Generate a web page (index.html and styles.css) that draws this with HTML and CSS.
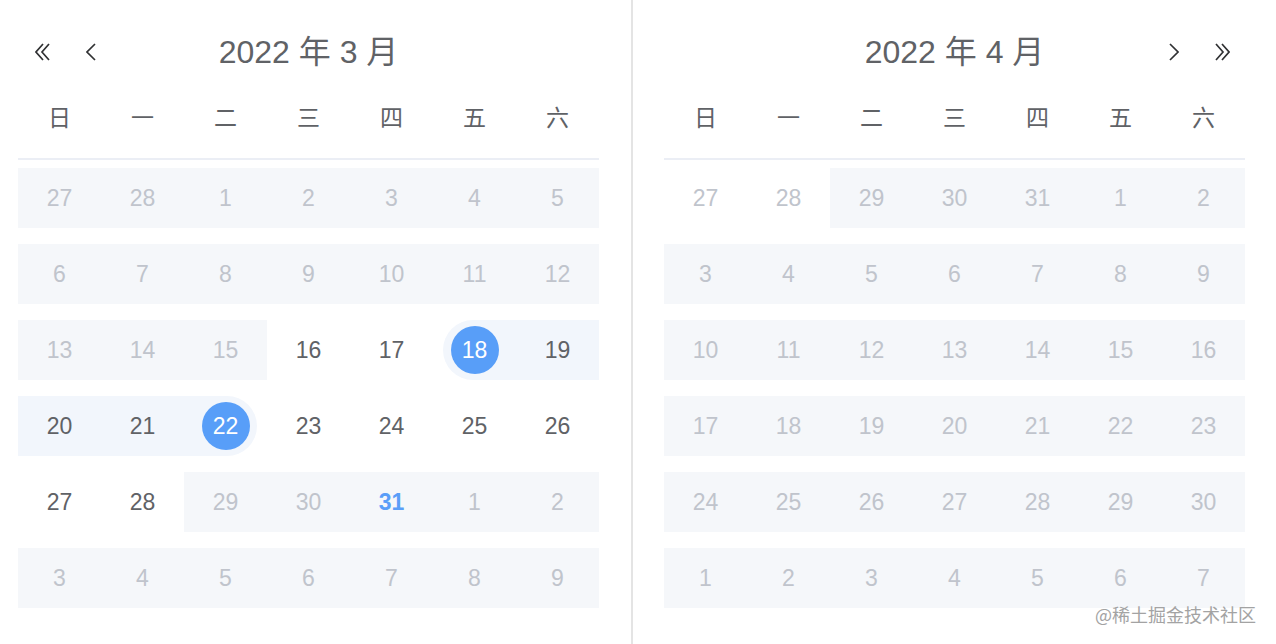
FILE: index.html
```html
<!DOCTYPE html>
<html lang="zh-CN">
<head>
<meta charset="utf-8">
<title>日期范围选择</title>
<link rel="stylesheet" href="styles.css">
</head>
<body>
<div class="picker">
  <section class="panel panel-left">
    <header class="head">
      <div class="nav nav-left">
        <svg class="ico ico-d" viewBox="0 0 16 18"><polyline points="8,1 1,9 8,17"/><polyline points="14,1 7,9 14,17"/></svg>
        <svg class="ico ico-s" viewBox="0 0 10 18"><polyline points="9,1 1,9 9,17"/></svg>
      </div>
      <div class="title">2022 年 3 月</div>
      <div class="nav nav-right"></div>
    </header>
    <div class="week">
      <span>日</span><span>一</span><span>二</span><span>三</span><span>四</span><span>五</span><span>六</span>
    </div>
    <div class="rows">
      <div class="row">
        <div class="cell dis"><span>27</span></div><div class="cell dis"><span>28</span></div><div class="cell dis"><span>1</span></div><div class="cell dis"><span>2</span></div><div class="cell dis"><span>3</span></div><div class="cell dis"><span>4</span></div><div class="cell dis"><span>5</span></div>
      </div>
      <div class="row">
        <div class="cell dis"><span>6</span></div><div class="cell dis"><span>7</span></div><div class="cell dis"><span>8</span></div><div class="cell dis"><span>9</span></div><div class="cell dis"><span>10</span></div><div class="cell dis"><span>11</span></div><div class="cell dis"><span>12</span></div>
      </div>
      <div class="row">
        <div class="cell dis"><span>13</span></div><div class="cell dis"><span>14</span></div><div class="cell dis"><span>15</span></div><div class="cell"><span>16</span></div><div class="cell"><span>17</span></div><div class="cell range start"><span>18</span></div><div class="cell range"><span>19</span></div>
      </div>
      <div class="row">
        <div class="cell range"><span>20</span></div><div class="cell range"><span>21</span></div><div class="cell range end"><span>22</span></div><div class="cell"><span>23</span></div><div class="cell"><span>24</span></div><div class="cell"><span>25</span></div><div class="cell"><span>26</span></div>
      </div>
      <div class="row">
        <div class="cell"><span>27</span></div><div class="cell"><span>28</span></div><div class="cell dis"><span>29</span></div><div class="cell dis"><span>30</span></div><div class="cell dis today"><span>31</span></div><div class="cell dis"><span>1</span></div><div class="cell dis"><span>2</span></div>
      </div>
      <div class="row">
        <div class="cell dis"><span>3</span></div><div class="cell dis"><span>4</span></div><div class="cell dis"><span>5</span></div><div class="cell dis"><span>6</span></div><div class="cell dis"><span>7</span></div><div class="cell dis"><span>8</span></div><div class="cell dis"><span>9</span></div>
      </div>
    </div>
  </section>
  <section class="panel panel-right">
    <header class="head">
      <div class="nav nav-left"></div>
      <div class="title">2022 年 4 月</div>
      <div class="nav nav-right">
        <svg class="ico ico-s" viewBox="0 0 10 18"><polyline points="1,1 9,9 1,17"/></svg>
        <svg class="ico ico-d" viewBox="0 0 16 18"><polyline points="2,1 9,9 2,17"/><polyline points="8,1 15,9 8,17"/></svg>
      </div>
    </header>
    <div class="week">
      <span>日</span><span>一</span><span>二</span><span>三</span><span>四</span><span>五</span><span>六</span>
    </div>
    <div class="rows">
      <div class="row">
        <div class="cell prev"><span>27</span></div><div class="cell prev"><span>28</span></div><div class="cell dis"><span>29</span></div><div class="cell dis"><span>30</span></div><div class="cell dis"><span>31</span></div><div class="cell dis"><span>1</span></div><div class="cell dis"><span>2</span></div>
      </div>
      <div class="row">
        <div class="cell dis"><span>3</span></div><div class="cell dis"><span>4</span></div><div class="cell dis"><span>5</span></div><div class="cell dis"><span>6</span></div><div class="cell dis"><span>7</span></div><div class="cell dis"><span>8</span></div><div class="cell dis"><span>9</span></div>
      </div>
      <div class="row">
        <div class="cell dis"><span>10</span></div><div class="cell dis"><span>11</span></div><div class="cell dis"><span>12</span></div><div class="cell dis"><span>13</span></div><div class="cell dis"><span>14</span></div><div class="cell dis"><span>15</span></div><div class="cell dis"><span>16</span></div>
      </div>
      <div class="row">
        <div class="cell dis"><span>17</span></div><div class="cell dis"><span>18</span></div><div class="cell dis"><span>19</span></div><div class="cell dis"><span>20</span></div><div class="cell dis"><span>21</span></div><div class="cell dis"><span>22</span></div><div class="cell dis"><span>23</span></div>
      </div>
      <div class="row">
        <div class="cell dis"><span>24</span></div><div class="cell dis"><span>25</span></div><div class="cell dis"><span>26</span></div><div class="cell dis"><span>27</span></div><div class="cell dis"><span>28</span></div><div class="cell dis"><span>29</span></div><div class="cell dis"><span>30</span></div>
      </div>
      <div class="row">
        <div class="cell dis"><span>1</span></div><div class="cell dis"><span>2</span></div><div class="cell dis"><span>3</span></div><div class="cell dis"><span>4</span></div><div class="cell dis"><span>5</span></div><div class="cell dis"><span>6</span></div><div class="cell dis"><span>7</span></div>
      </div>
    </div>
  </section>
  <div class="mark">@稀土掘金技术社区</div>
</div>
</body>
</html>
```

FILE: styles.css
```css
* { box-sizing: border-box; }
html, body {
  margin: 0;
  padding: 0;
  background: #ffffff;
}
body {
  font-family: "Liberation Sans", Arial, "Noto Sans CJK SC", sans-serif;
  color: #606266;
}
.picker {
  position: relative;
  display: flex;
  width: 1276px;
  height: 644px;
  overflow: hidden;
}
.panel {
  height: 644px;
  flex: none;
}
.panel-left {
  width: 633px;
  padding: 0 32px 0 18px;
  border-right: 2px solid #e4e4e4;
}
.panel-right {
  width: 643px;
  padding: 0 31px 0 31px;
}
.head {
  display: grid;
  grid-template-columns: 1fr auto 1fr;
  align-items: center;
  height: 48px;
  margin-top: 28px;
}
.title {
  font-family: "Liberation Sans", Arial, "Noto Sans CJK SC", sans-serif;
  font-size: 32px;
  line-height: 48px;
  color: #606266;
  white-space: nowrap;
}
.nav {
  display: flex;
  align-items: center;
  gap: 35px;
}
.nav-left { padding-left: 17px; justify-content: flex-start; }
.nav-right { padding-right: 15px; justify-content: flex-end; }
.ico {
  height: 18px;
  fill: none;
  stroke: #303133;
  stroke-width: 1.7;
  stroke-linejoin: miter;
}
.ico-d { width: 16px; }
.ico-s { width: 10px; }
.week {
  display: grid;
  grid-template-columns: repeat(7, 1fr);
  margin-top: 16px;
  height: 68px;
  padding-bottom: 18px;
  border-bottom: 2px solid #ebeef5;
}
.week span {
  text-align: center;
  font-family: "Noto Sans CJK SC", sans-serif;
  font-size: 23px;
  line-height: 48px;
  color: #606266;
}
.row {
  display: grid;
  grid-template-columns: repeat(7, 1fr);
  padding: 8px 0;
}
.cell {
  height: 60px;
  display: flex;
  align-items: center;
  justify-content: center;
  font-size: 23px;
  color: #606266;
}
.cell span {
  display: block;
  width: 48px;
  height: 48px;
  line-height: 48px;
  text-align: center;
  border-radius: 50%;
}
.cell.dis {
  background: #f5f7fa;
  color: #c0c4cc;
}
.cell.prev {
  color: #c0c4cc;
}
.cell.today {
  color: #5a9ef8;
  font-weight: 700;
}
.cell.range {
  background: #f2f6fc;
}
.cell.start {
  margin-left: 10px;
  padding-right: 10px;
  border-radius: 30px 0 0 30px;
}
.cell.end {
  margin-right: 10px;
  padding-left: 10px;
  border-radius: 0 30px 30px 0;
}
.cell.start span,
.cell.end span {
  background: #589ef8;
  color: #ffffff;
}
.mark {
  position: absolute;
  right: 20px;
  bottom: 18px;
  font-family: "Noto Sans CJK SC", sans-serif;
  font-size: 18px;
  line-height: 24px;
  color: #a3a3a3;
}
```
